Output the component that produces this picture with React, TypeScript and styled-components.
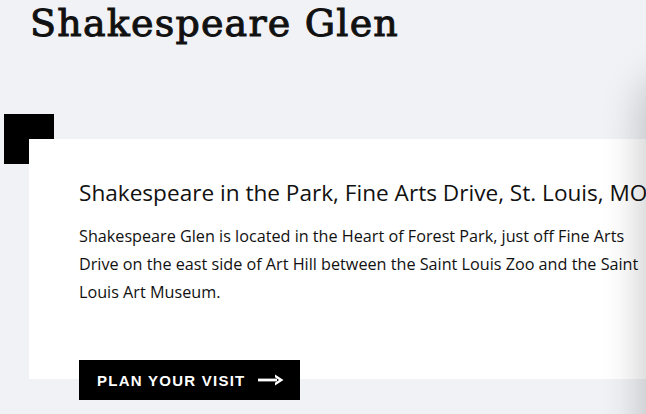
import React from "react";
import styled, { createGlobalStyle } from "styled-components";

const Global = createGlobalStyle`
  html, body {
    margin: 0;
    padding: 0;
    background: #f1f2f6;
    overflow: hidden;
    width: 646px;
    height: 414px;
  }
  * { box-sizing: border-box; }
`;

const Page = styled.main`
  position: relative;
  width: 646px;
  height: 414px;
  overflow: hidden;
  padding-left: 29px;
  color: #111;
`;

const Title = styled.h1`
  margin: 0 0 0 1px;
  font-family: "DejaVu Serif", serif;
  font-weight: 400;
  font-size: 38px;
  line-height: 46px;
  letter-spacing: 1.2px;
  -webkit-text-stroke: 1px #111;
  color: #111;
  white-space: nowrap;
`;

const Section = styled.section`
  position: relative;
  margin-top: 93px;
  width: 700px;
  &::before {
    content: "";
    position: absolute;
    left: -25px;
    top: -25px;
    width: 50px;
    height: 50px;
    background: #000;
  }
`;

const Card = styled.div`
  position: relative;
  background: #fff;
  height: 240px;
  padding: 39px 0 0 50px;
  display: flex;
  flex-direction: column;
`;

const Heading = styled.h2`
  margin: 0;
  font-family: "Open Sans", Lato, sans-serif;
  font-weight: 400;
  font-size: 22.6px;
  line-height: 30px;
  white-space: nowrap;
  color: #111;
`;

const Text = styled.p`
  margin: 14px 0 0;
  width: 572px;
  font-family: "Open Sans", Lato, sans-serif;
  font-size: 16.2px;
  line-height: 28px;
  color: #111;
`;

const Button = styled.a`
  margin-top: auto;
  margin-bottom: -21px;
  align-self: flex-start;
  display: inline-flex;
  align-items: center;
  gap: 12px;
  height: 40px;
  padding: 0 16px 0 18px;
  background: #000;
  color: #fff;
  font-family: "Liberation Sans", Arial, sans-serif;
  font-weight: 700;
  font-size: 15px;
  letter-spacing: 1.25px;
  text-decoration: none;
  text-transform: uppercase;
`;

const Shade = styled.div`
  position: absolute;
  left: 646px;
  top: 80px;
  width: 120px;
  height: 420px;
  border-radius: 30px;
  background: #fff;
  box-shadow: 0 0 40px 4px rgba(0, 0, 0, 0.22);
`;

const Arrow = () => (
  <svg width="26" height="12" viewBox="0 0 26 12" aria-hidden="true">
    <path d="M0 4.6h19v2.8H0z" fill="#fff" />
    <path d="M17 0.5 L25.5 6 L17 11.5 L17 8.8 L21 6 L17 3.2 Z" fill="#fff" />
  </svg>
);

export default function App() {
  return (
    <>
      <Global />
      <Page>
        <Title>Shakespeare Glen</Title>
        <Section>
          <Card>
            <Heading>Shakespeare in the Park, Fine Arts Drive, St. Louis, MO</Heading>
            <Text>
              Shakespeare Glen is located in the Heart of Forest Park, just off Fine Arts
              Drive on the east side of Art Hill between the Saint Louis Zoo and the Saint
              Louis Art Museum.
            </Text>
            <Button href="#">
              Plan your visit
              <Arrow />
            </Button>
          </Card>
        </Section>
        <Shade />
      </Page>
    </>
  );
}
